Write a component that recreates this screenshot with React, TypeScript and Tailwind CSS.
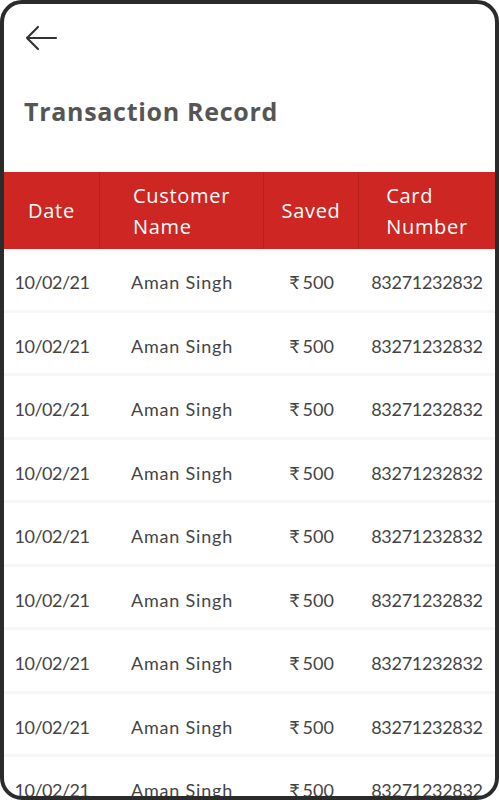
import React from "react";

type Row = { date: string; name: string; saved: string; card: string };

const rows: Row[] = Array.from({ length: 9 }, () => ({
  date: "10/02/21",
  name: "Aman Singh",
  saved: "500",
  card: "83271232832",
}));

const BackArrow = () => (
  <svg width="34" height="28" viewBox="0 0 34 28" fill="none">
    <path
      d="M32 14H3M14 3L3 14L14 25"
      stroke="#333"
      strokeWidth="2.2"
      strokeLinecap="round"
      strokeLinejoin="round"
    />
  </svg>
);

const App = () => {
  return (
    <div className="w-[499px] h-[800px] bg-white">
      <div
        className="w-full h-full border-[4px] border-[#2b2b2b] rounded-[22px] overflow-hidden flex flex-col"
        style={{ fontFamily: "Lato, 'Noto Sans', sans-serif" }}
      >
        <div className="shrink-0 pl-[20px] pt-[20px] h-[60px]">
          <BackArrow />
        </div>
        <div className="shrink-0 pl-[20px] pt-[29px] h-[108px]">
          <p className="text-[25px] font-bold text-[#555] tracking-[0.7px] font-['Open_Sans',sans-serif]">
            Transaction Record
          </p>
        </div>
        <div className="shrink-0 flex bg-[#cd2623] h-[77px] text-white text-[20px] leading-[31px] font-medium font-['Open_Sans',sans-serif] tracking-[0.7px]">
          <div className="w-[96px] flex items-center justify-center border-r border-[#b91f1c]">
            Date
          </div>
          <div className="w-[164px] flex items-center justify-center border-r border-[#b91f1c]">
            <p>
              Customer
              <br />
              Name
            </p>
          </div>
          <div className="w-[95px] flex items-center justify-center border-r border-[#b91f1c]">
            Saved
          </div>
          <div className="flex-1 flex items-center justify-center">
            <p>
              Card
              <br />
              Number
            </p>
          </div>
        </div>
        <div className="flex flex-col">
          {rows.map((r, i) => (
            <div
              key={i}
              className="flex h-[63.5px] shrink-0 border-b-[3px] border-[#f7f7f7] text-[18px] text-[#444] items-center pt-[7px]"
            >
              <div className="w-[96px] text-center tracking-[-0.5px]">{r.date}</div>
              <div className="w-[164px] text-center tracking-[0.8px]">{r.name}</div>
              <div className="w-[95px] text-center">
                <span className="mr-[3px]">₹</span>
                {r.saved}
              </div>
              <div className="flex-1 text-center tracking-[-0.3px]">{r.card}</div>
            </div>
          ))}
        </div>
      </div>
    </div>
  );
};

export default App;
